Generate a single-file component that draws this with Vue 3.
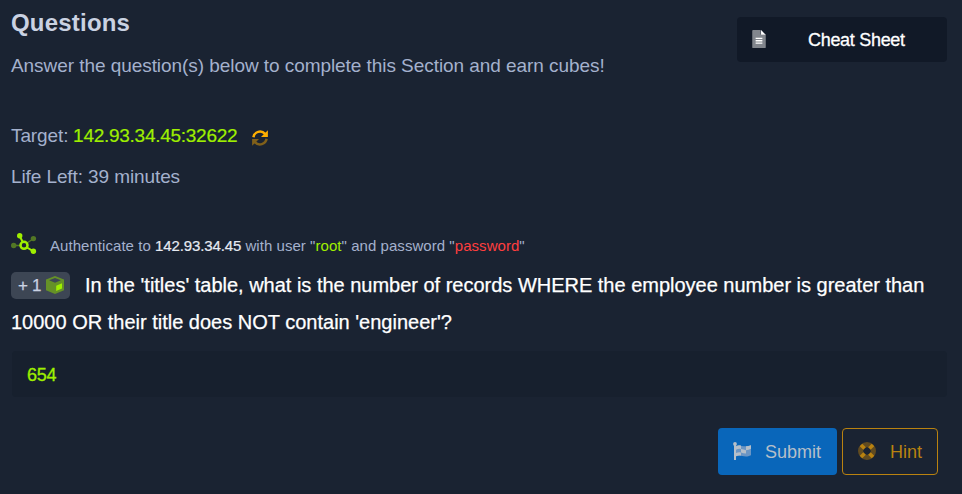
<script setup>
const target = '142.93.34.45'
const port = '32622'
const answer = '654'
</script>

<template>
  <main class="panel">
    <header class="head">
      <div class="intro">
        <h1 class="title">Questions</h1>
        <p class="lead">Answer the question(s) below to complete this Section and earn cubes!</p>
      </div>
      <button class="cheat">
        <svg class="file" viewBox="0 0 384 512">
          <path fill="#82868d" d="M24 0h216v112q0 16 16 16h128v360q0 24-24 24H24q-24 0-24-24V24Q0 0 24 0z" />
          <path fill="#fff" d="M250 0l134 134H250zM96 218h192v38H96zM96 286h192v38H96zM96 354h192v38H96z" />
        </svg>
        <span class="cheat-label">Cheat Sheet</span>
      </button>
    </header>

    <p class="line target">
      <span>Target: </span><span class="green addr">{{ target }}:{{ port }}</span>
      <svg class="refresh" viewBox="0 0 16 16">
        <path fill="none" stroke="#ffaf00" stroke-width="2.5" d="M1.400 7.200A6.700 6.700 0 0 1 13 3.900" />
        <path fill="#ffaf00" d="M15.900.2v6.900H9z" />
        <path fill="none" stroke="#80601a" stroke-width="2.5" d="M14.600 8.800A6.700 6.700 0 0 1 3 12.100" />
        <path fill="#80601a" d="M.1 15.800V8.900h6.900z" />
      </svg>
    </p>
    <p class="line life">Life Left: 39 minutes</p>

    <p class="auth">
      <svg class="nodes" viewBox="0 0 26 22">
        <path stroke="#527725" stroke-width="1.5" d="M3 12.5h7M16 10l6-4" />
        <circle cx="2.700" cy="12.500" r="2.700" fill="#527725" />
        <circle cx="22.400" cy="5.600" r="2.700" fill="#527725" />
        <path stroke="#9fef00" stroke-width="2" d="M8.700 3l3 6M16 14.500l6.500 3.800" />
        <circle cx="8.700" cy="2.800" r="2.700" fill="#9fef00" />
        <circle cx="22.400" cy="18.200" r="2.700" fill="#9fef00" />
        <circle cx="13" cy="12.300" r="3.500" fill="none" stroke="#9fef00" stroke-width="2.500" />
      </svg>
      <span class="auth-text">Authenticate to <b>{{ target }}</b> with user "<i class="green">root</i>" and password "<i class="red">password</i>"</span>
    </p>

    <p class="question">
      <span class="badge">
        <span class="points">+ 1</span>
        <svg class="cube" viewBox="0 0 18 18">
          <path fill="#659127" d="M9 0l9 3.500v10.800L9 18l-9-3.700V3.500z" />
          <path fill="#3d4654" d="M9 2l5.900 2.300L9 6.700 3.100 4.300z" />
          <path fill="#9fef00" d="M10.200 9.700L16 7.300v5.200l-5.800 2.600z" />
        </svg>
      </span>
      <span class="q1">In the 'titles' table, what is the number of records WHERE the employee number is greater than</span><br>
      <span class="q2">10000 OR their title does NOT contain 'engineer'?</span>
    </p>

    <div class="answer green">{{ answer }}</div>

    <footer class="actions">
      <button class="btn submit">
        <svg class="flag" viewBox="0 0 18 18">
          <circle cx="2" cy="2" r="1.900" fill="#b5bfc9" />
          <path fill="#b5bfc9" d="M1 2h2v16H1z" />
          <path fill="#6b96c5" d="M3 4.200c4-2.500 7 2 15-1v10c-7 3.500-10-1.500-15 1z" />
          <path fill="#b5bfc9" d="M3 4.200Q5.500 2.800 8 3.400V7Q5.500 6.500 3 7.700zM8 7q2.500.5 5 1.200v3.400q-2.500-.2-5-1.200zM13 4.300q2.500 0 5-1.100v3.500q-2.500 1.300-5 1.500zM3 11q2.500-1.200 5-.6v3.200q-2.500-.5-5 .6z" />
        </svg>
        <span class="submit-label">Submit</span>
      </button>
      <button class="btn hint">
        <svg class="ring" viewBox="0 0 18 18">
          <circle cx="9" cy="9" r="6.400" fill="none" stroke="#614b20" stroke-width="5.200" />
          <path stroke="#b98210" stroke-width="3.600" d="M3 3l3.600 3.600M15 3l-3.600 3.600M3 15l3.600-3.600M15 15l-3.600-3.600" />
        </svg>
        <span class="hint-label">Hint</span>
      </button>
    </footer>
  </main>
</template>

<style>
body {
  background: #1a2332;
}
</style>

<style scoped>
.panel {
  box-sizing: border-box;
  height: 494px;
  padding: 0 15px 0 11px;
  overflow: hidden;
  border-bottom: 4px solid #18202e;
  background: #1a2332;
  color: #a4b1cd;
  font-family: "Liberation Sans", Arial, sans-serif;
  font-size: 18px;
}
p, h1 {
  margin: 0;
}
b, i {
  font-style: normal;
  font-weight: 400;
}
b {
  color: #e6eaf2;
  letter-spacing: -0.12px;
  -webkit-text-stroke: 0.2px;
}
button {
  border: 0;
  font: inherit;
}
.green {
  color: #9fef00;
}
.red {
  color: #ff3e3e;
}
.head {
  display: flex;
  justify-content: space-between;
  height: 115px;
}
.title {
  padding-top: 8px;
  color: #cad2e2;
  font-size: 24px;
  line-height: 30px;
  letter-spacing: 0.2px;
}
.lead {
  margin-top: 17px;
  font-size: 19px;
  line-height: 22px;
  letter-spacing: -0.06px;
}
.cheat {
  display: flex;
  align-items: center;
  width: 210px;
  height: 45px;
  margin-top: 17px;
  padding: 0 15px;
  border-radius: 4px;
  background: #111927;
  color: #fff;
}
.file {
  width: 14px;
  height: 18px;
  margin-bottom: 1px;
}
.cheat-label {
  margin-left: 42px;
  padding-top: 2px;
  letter-spacing: -0.3px;
  -webkit-text-stroke: 0.3px;
}
.line {
  display: flex;
  height: 41px;
  align-items: center;
  font-size: 19px;
  letter-spacing: -0.1px;
  white-space: pre;
}
.addr {
  margin-left: -0.5px;
  letter-spacing: -0.27px;
  -webkit-text-stroke: 0.2px;
}
.refresh {
  width: 16px;
  height: 16px;
  margin: 4px 0 0 15px;
}
.auth {
  display: flex;
  align-items: center;
  height: 24px;
  margin-top: 35px;
  font-size: 15px;
  letter-spacing: 0.05px;
}
.nodes {
  width: 26px;
  height: 22px;
  margin-right: 13px;
}
.auth-text {
  padding-top: 3px;
}
.question {
  margin-top: 11px;
  color: #fff;
  font-size: 20px;
  line-height: 37px;
  white-space: nowrap;
  -webkit-text-stroke: 0.25px;
}
.badge {
  display: inline-flex;
  align-items: center;
  justify-content: space-between;
  box-sizing: border-box;
  width: 59px;
  height: 27px;
  margin: -2px 9px 0 0;
  padding: 0 6px 0 7px;
  border-radius: 5px;
  background: #3d4654;
  color: #cad2e2;
  font-size: 17px;
  vertical-align: middle;
}
.q1 {
  padding-left: 6px;
  letter-spacing: -0.01px;
}
.points {
  letter-spacing: -0.3px;
}
.cube {
  width: 18px;
  height: 18px;
  margin-bottom: 2px;
}
.answer {
  display: flex;
  align-items: center;
  box-sizing: border-box;
  height: 46px;
  margin: 10px 0 0 1px;
  padding: 3px 0 0 15px;
  border-radius: 4px;
  background: #17202e;
  letter-spacing: -0.2px;
  -webkit-text-stroke: 0.3px;
}
.actions {
  display: flex;
  justify-content: flex-end;
  gap: 5px;
  margin: 31px 9px 0 0;
}
.btn {
  display: flex;
  align-items: center;
  box-sizing: border-box;
  height: 47px;
  padding: 0 15px;
  border-radius: 4px;
}
.submit {
  width: 119px;
  background: #0966ba;
  color: #b5bfc9;
}
.hint {
  width: 96px;
  border: 1px solid #b98210;
  background: transparent;
  color: #b98210;
}
.flag, .ring {
  width: 18px;
  height: 18px;
  flex: none;
  margin-bottom: 1px;
}
.submit-label, .hint-label {
  margin-left: 14px;
  padding-top: 1px;
}
</style>
